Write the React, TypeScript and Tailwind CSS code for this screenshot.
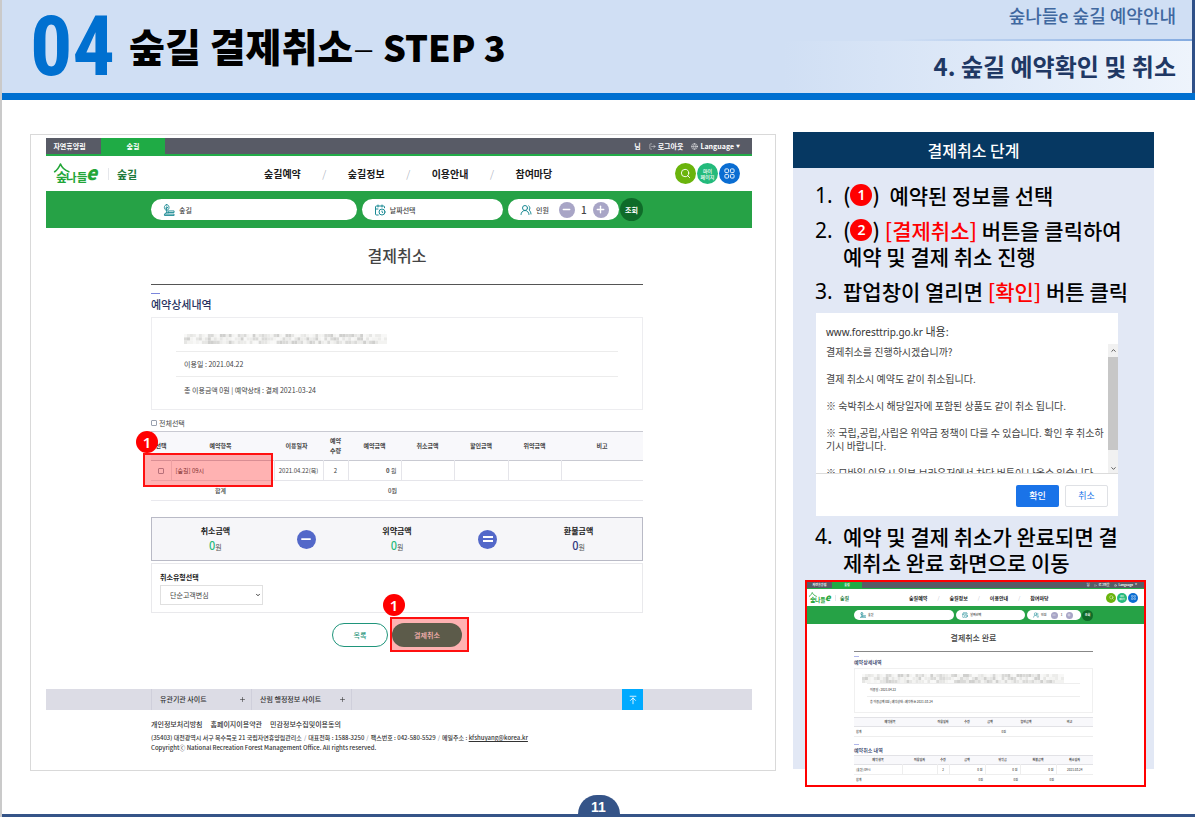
import React from 'react';
import clsx from 'clsx';
import {
  ArrowUpToLine,
  CalendarClock,
  ChevronDown,
  ChevronUp,
  Globe,
  LogOut,
  Minus,
  Plus,
  Search,
  UsersRound,
} from 'lucide-react';

type SizeProps = {
  small?: boolean;
};

type MarkerProps = {
  value: string;
  className?: string;
};

const menu = ['숲길예약', '숲길정보', '이용안내', '참여마당'];

const Marker = ({ value, className }: MarkerProps) => (
  <span
    className={clsx(
      "flex size-[22px] items-center justify-center rounded-full bg-[#ff0000] font-['Noto_Sans',sans-serif] font-semibold leading-none text-white",
      className
    )}
  >
    {value}
  </span>
);

const Logo = ({ small }: SizeProps) => (
  <svg
    viewBox="0 0 136 68"
    className={clsx(
      'overflow-visible',
      small ? 'h-[11px] w-[22px]' : 'h-[22px] w-[44px]'
    )}
    role="img"
    aria-label="숲나들e"
  >
    <path
      d="M2 27C10 22 16 12 20 3C24 13 32 22 46 27"
      fill="none"
      stroke="#23a638"
      strokeWidth="5"
      strokeLinecap="round"
      strokeLinejoin="round"
    />
    <g fill="#23a638" fontFamily="'Noto Sans CJK KR', sans-serif" fontWeight="700">
      <text x="6" y="60" fontSize="38">
        숲
      </text>
      <text x="37" y="59" fontSize="36">
        나들
      </text>
      <text x="99" y="54" fontSize="58" fontStyle="italic" fontWeight="900">
        e
      </text>
    </g>
  </svg>
);

const TreeIcon = ({ className }: { className: string }) => (
  <svg
    viewBox="0 0 24 26"
    className={className}
    fill="none"
    stroke="#1b8a94"
    strokeWidth="2"
    strokeLinecap="round"
    strokeLinejoin="round"
    aria-hidden="true"
  >
    <path d="M7 1.500c-3 0-5 2.500-5 6s2 6 5 6 5-2.500 5-6-2-6-5-6z" />
    <path d="M7 6v13M7 9l2.500-2M7 11L4.500 9" />
    <path d="M11 15h12v3.500H11zM3 22h20v3H3zM3 22l2-3h6" />
  </svg>
);

const GridIcon = ({ className }: { className: string }) => (
  <svg
    viewBox="0 0 24 24"
    className={className}
    fill="none"
    stroke="currentColor"
    strokeWidth="2"
    aria-hidden="true"
  >
    <rect x="2" y="2" width="8" height="8" rx="2" />
    <rect x="14" y="2" width="8" height="8" rx="2" />
    <rect x="2" y="14" width="8" height="8" rx="2" />
    <rect x="14" y="14" width="8" height="8" rx="2" />
  </svg>
);

// Pixelated strip that hides the booking owner's details
const Mosaic = ({ className }: { className: string }) => {
  const shades = ['#f3f3f1', '#e6e6e4', '#dadad8', '#ececea', '#d0d0ce', '#f8f8f7'];
  let seed = 17;
  const cells = Array.from({ length: 204 }, (_, i) => {
    seed = (seed * 16807) % 2147483647;
    return {
      x: (i % 68) * 3,
      y: Math.floor(i / 68) * 3,
      fill: shades[seed % shades.length],
    };
  });
  return (
    <svg
      viewBox="0 0 204 9"
      preserveAspectRatio="none"
      className={className}
      aria-hidden="true"
    >
      {cells.map(({ x, y, fill }) => (
        <rect key={`${x}-${y}`} x={x} y={y} width="3" height="3" fill={fill} />
      ))}
    </svg>
  );
};

const SiteTopBar = ({ small }: SizeProps) => (
  <div
    className={clsx(
      'flex items-stretch bg-[#585b66] font-bold text-white',
      small
        ? 'h-[7px] border-b border-[#22ab48] text-[3px] leading-[6px]'
        : 'h-[18px] border-b-2 border-[#22ab48] text-[7px] leading-[16px]'
    )}
  >
    <a
      href="#forest"
      className={clsx('text-center', small ? 'w-[25px]' : 'w-[55px] pr-2')}
    >
      자연휴양림
    </a>
    <a
      href="#trail"
      className={clsx(
        'bg-[#1fab45] text-center',
        small ? 'w-[30px]' : 'w-[64px]'
      )}
    >
      숲길
    </a>
    <div
      className={clsx(
        'ml-auto flex items-center',
        small ? 'gap-1 pr-[7px]' : 'gap-2 pr-3'
      )}
    >
      <span>님</span>
      <a href="#logout" className="flex items-center gap-[2px]">
        <LogOut className={small ? 'size-[3px]' : 'size-[7px]'} strokeWidth={1.5} />
        로그아웃
      </a>
      <button type="button" className="flex items-center gap-[2px]">
        <Globe className={small ? 'size-[3px]' : 'size-[7px]'} strokeWidth={1.5} />
        Language
        <span className={small ? 'text-[2px]' : 'text-[4px]'}>▼</span>
      </button>
    </div>
  </div>
);

const SiteNav = ({ small }: SizeProps) => {
  const round = clsx(
    'flex items-center justify-center rounded-full text-white',
    small ? 'size-[10px]' : 'size-[21px]'
  );
  return (
    <nav className={clsx('flex items-center', small ? 'h-[17px]' : 'h-[35px]')}>
      <div
        className={clsx(
          'flex items-center',
          small ? 'w-[102px] pl-[2px]' : 'w-[218px] pl-2'
        )}
      >
        <Logo small={small} />
        <a
          href="#trail"
          className={clsx(
            'border-l border-gray-200 font-bold text-[#1c7a3a]',
            small
              ? 'ml-1 pl-1 text-[5px] leading-[6px]'
              : 'ml-[10px] pl-2 text-[11px] leading-3'
          )}
        >
          숲길
        </a>
      </div>
      <ul
        className={clsx(
          'flex font-bold text-[#1a1a1a]',
          small ? 'text-[5px] leading-[6px]' : 'text-[10px] leading-4'
        )}
      >
        {menu.map((item, i) => (
          <li key={item} className="flex">
            {i > 0 && (
              <span
                className={clsx(
                  'text-center font-light text-gray-400',
                  small ? 'w-[22px]' : 'w-[47px]'
                )}
              >
                /
              </span>
            )}
            <a href={`#menu-${i}`}>{item}</a>
          </li>
        ))}
      </ul>
      <div
        className={clsx(
          'ml-auto flex gap-px',
          small ? 'pr-[6px]' : 'pr-3'
        )}
      >
        <button type="button" aria-label="검색" className={clsx(round, 'bg-[#6ab40c]')}>
          <Search className={small ? 'size-[5px]' : 'size-[11px]'} />
        </button>
        <a
          href="#mypage"
          className={clsx(
            round,
            'bg-[#23ba7b] text-center font-medium',
            small ? 'text-[2px] leading-[3px]' : 'text-[5px] leading-[6px]'
          )}
        >
          마이
          <br />
          페이지
        </a>
        <button
          type="button"
          aria-label="전체메뉴"
          className={clsx(round, 'bg-[#0a6dd2]')}
        >
          <GridIcon className={small ? 'size-[5px]' : 'size-[11px]'} />
        </button>
      </div>
    </nav>
  );
};

const SiteSearch = ({ small }: SizeProps) => {
  const pill = clsx(
    'flex items-center rounded-full bg-white',
    small ? 'h-[10px] gap-[2px] pl-[6px]' : 'h-[21px] gap-1 pl-3'
  );
  const step = clsx(
    'flex items-center justify-center rounded-full bg-[#a8a5c6] text-white',
    small ? 'size-[7px]' : 'size-4'
  );
  const icon = small ? 'size-[6px]' : 'size-3';
  return (
    <div
      className={clsx(
        'flex items-center bg-[#26a246] font-medium text-[#444]',
        small
          ? 'h-[18px] gap-[2px] pl-[47px] pr-[51px] text-[3px] leading-[4px]'
          : 'h-[37px] gap-[5px] pl-[105px] pr-[109px] text-[7px] leading-[10px]'
      )}
    >
      <button type="button" className={clsx(pill, 'flex-[3]')}>
        <TreeIcon className={icon} />
        숲길
      </button>
      <button type="button" className={clsx(pill, 'flex-[2]')}>
        <CalendarClock className={clsx(icon, 'text-[#1b8a94]')} />
        날짜선택
      </button>
      <div className={clsx(pill, small ? 'w-[54px]' : 'w-[111px]')}>
        <UsersRound className={clsx(icon, 'text-[#1b8a94]')} />
        인원
        <button
          type="button"
          aria-label="인원 감소"
          className={clsx(step, small ? 'ml-[2px]' : 'ml-[6px]')}
        >
          <Minus className={small ? 'size-1' : 'size-[11px]'} strokeWidth={3} />
        </button>
        <span
          className={clsx('text-center', small ? 'w-1' : 'w-[10px] text-[10px]')}
        >
          1
        </span>
        <button type="button" aria-label="인원 증가" className={step}>
          <Plus className={small ? 'size-1' : 'size-[11px]'} strokeWidth={3} />
        </button>
      </div>
      <button
        type="button"
        className={clsx(
          'shrink-0 rounded-full bg-[#0f6b29] font-bold text-white',
          small ? '-ml-px size-[11px]' : '-ml-1 size-[23px]'
        )}
      >
        조회
      </button>
    </div>
  );
};

const SectionHeading = ({
  small,
  children,
}: SizeProps & { children: React.ReactNode }) => (
  <>
    <div
      className={clsx(
        'h-px bg-[#7b86dc]',
        small ? 'w-[5px] opacity-60' : 'w-[9px]'
      )}
    />
    <h3
      className={clsx(
        'mt-[2px] font-medium text-[#28325f]',
        small ? 'text-[5px] leading-[6px]' : 'text-[11px] leading-4'
      )}
    >
      {children}
    </h3>
  </>
);

const BookingTable = () => (
  <table className="w-full table-fixed border-collapse text-center text-[6px] leading-[10px] text-[#444]">
    <colgroup>
      <col className="w-[20px]" />
      <col className="w-[103px]" />
      <col className="w-[49px]" />
      <col className="w-[25px]" />
      <col className="w-[53px]" />
      <col className="w-[53px]" />
      <col className="w-[54px]" />
      <col className="w-[53px]" />
      <col />
    </colgroup>
    <thead className="border-y border-[#c9cad2] bg-[#f8f8fb]">
      <tr className="h-[29px]">
        <th className="whitespace-nowrap font-bold">선택</th>
        <th className="pr-1 font-bold">예약항목</th>
        <th className="pr-1 font-bold">이용일자</th>
        <th className="font-bold">
          예약
          <br />
          수량
        </th>
        <th className="font-bold">예약금액</th>
        <th className="font-bold">취소금액</th>
        <th className="font-bold">할인금액</th>
        <th className="font-bold">위약금액</th>
        <th className="font-bold">비고</th>
      </tr>
    </thead>
    <tbody>
      <tr className="h-[20px] divide-x divide-[#e5e5ea] border-b border-[#e5e5ea]">
        <td>
          <input
            type="checkbox"
            aria-label="[숲길] 09시 선택"
            className="mx-auto block size-[6px] appearance-none rounded-[1px] border border-gray-400 bg-white"
          />
        </td>
        <td className="pl-1 text-left">[숲길] 09시</td>
        <td className="whitespace-nowrap">2021.04.22(목)</td>
        <td>2</td>
        <td className="pr-1 text-right">
          <b>0</b> 원
        </td>
        <td />
        <td />
        <td />
        <td />
      </tr>
      <tr className="h-[20px] border-b border-[#e9e9ee] font-medium">
        <td />
        <td className="pr-1">합계</td>
        <td />
        <td />
        <td className="pr-1 text-right">0원</td>
        <td colSpan={4} />
      </tr>
    </tbody>
  </table>
);

type AmountProps = {
  label: string;
  className: string;
};

const Amount = ({ label, className }: AmountProps) => (
  <div className="text-center">
    <div className="text-[8px] font-bold leading-[14px] text-[#222]">{label}</div>
    <div className="text-[7px] leading-[14px] text-[#555]">
      <span className={clsx('text-[11px] font-medium', className)}>0</span>원
    </div>
  </div>
);

const CancelPage = () => (
  <div className="mt-[2px] border border-[#d9d9d9] pb-[17px] pl-[15px] pr-[23px] pt-[3px]">
    <SiteTopBar />
    <SiteNav />
    <SiteSearch />

    <div className="pl-[105px] pr-[109px] pt-[15px]">
      <h2 className="text-center text-[16px] font-medium leading-6 text-[#444]">
        결제취소
      </h2>
      <hr className="mb-2 mt-[17px] border-[#555]" />
      <SectionHeading>예약상세내역</SectionHeading>

      <div className="mt-[5px] border border-[#ededf0] px-[24px] pb-[6px] pt-4 text-[7px] text-[#444]">
        <div className="border-b border-[#ececec] pb-[7px] pl-2">
          <Mosaic className="h-[10px] w-[203px]" />
        </div>
        <p className="border-b border-[#ececec] pl-2 leading-[24px]">
          이용일 : 2021.04.22
        </p>
        <p className="pl-2 leading-[26px]">
          총 이용금액 0원 | 예약상태 : 결제 2021-03-24
        </p>
      </div>

      <label className="mb-[3px] mt-2 flex items-center gap-[2px] text-[7px] leading-[10px] text-[#444]">
        <input
          type="checkbox"
          className="size-[6px] appearance-none rounded-[1px] border border-gray-400"
        />
        전체선택
      </label>

      <div className="relative">
        <BookingTable />
        <div className="absolute -left-2 top-[22px] h-[34px] w-[130px] border-2 border-[#ff1010] bg-[#ff0000]/30" />
        <Marker value="1" className="absolute -left-[15px] top-0 text-[15px]" />
      </div>

      <div className="mt-4 grid h-[44px] grid-cols-5 place-items-center border border-[#b9bac6] bg-[#f6f6f9] px-[18px]">
        <Amount label="취소금액" className="text-[#2abb7c]" />
        <span className="flex size-[19px] items-center justify-center rounded-full bg-[#5368c9] text-white">
          <Minus className="size-[14px]" strokeWidth={3} />
        </span>
        <Amount label="위약금액" className="text-[#2abb7c]" />
        <span className="flex size-[19px] flex-col items-center justify-center gap-[2px] rounded-full bg-[#5368c9]">
          <i className="h-[2px] w-[10px] bg-white" />
          <i className="h-[2px] w-[10px] bg-white" />
        </span>
        <Amount label="환불금액" className="text-[#333a80]" />
      </div>

      <div className="mt-[2px] border border-[#e9e9ec] pb-[7px] pl-2 pt-2 text-[7px]">
        <label
          htmlFor="cancel-reason"
          className="block font-bold leading-[10px] text-[#222]"
        >
          취소유형선택
        </label>
        <div className="relative mt-[3px] w-[103px]">
          <select
            id="cancel-reason"
            className="block h-[20px] w-full appearance-none border border-[#e0e0e0] bg-white pl-[9px] text-[#444]"
          >
            <option>단순고객변심</option>
          </select>
          <ChevronDown
            className="pointer-events-none absolute right-[2px] top-[7px] size-[6px]"
            strokeWidth={3}
          />
        </div>
      </div>

      <div className="relative mx-auto mt-[10px] flex w-[130px] gap-1 text-[7px] font-medium">
        <button
          type="button"
          className="h-6 w-[56px] rounded-full border border-[#1f957b] text-[#1f957b]"
        >
          목록
        </button>
        <button
          type="button"
          className="h-6 w-[70px] rounded-full bg-[#16836a] text-white"
        >
          결제취소
        </button>
        <div className="absolute -right-[7px] -top-[6px] h-[35px] w-[79px] border-2 border-[#ff1010] bg-[#ff0000]/30" />
        <Marker
          value="1"
          className="absolute -top-[29px] left-[51px] text-[15px]"
        />
      </div>
    </div>

    <footer className="mt-[42px] text-[#333]">
      <div className="flex h-[21px] bg-[#dcdce5] pl-[105px] pr-[109px] text-[7px] font-medium leading-[21px]">
        {['유관기관 사이트', '산림 행정정보 사이트'].map((site) => (
          <button
            key={site}
            type="button"
            className="flex w-[100px] items-center justify-between border-l border-[#cfcfdb] pl-2 pr-[5px]"
          >
            {site}
            <Plus className="size-[7px]" />
          </button>
        ))}
        <span className="border-l border-[#cfcfdb]" />
        <button
          type="button"
          aria-label="맨 위로"
          className="ml-auto flex w-[21px] items-center justify-center bg-[#00aaff] text-white"
        >
          <ArrowUpToLine className="size-[10px]" />
        </button>
      </div>
      <div className="pl-[105px] text-[6px] font-medium leading-[10px]">
        <ul className="mt-[9px] flex gap-2 text-[7px]">
          <li>
            <a href="#privacy">개인정보처리방침</a>
          </li>
          <li>
            <a href="#terms">홈페이지이용약관</a>
          </li>
          <li>
            <a href="#consent">민감정보수집및이용동의</a>
          </li>
        </ul>
        <address className="mt-1 flex gap-[2px] not-italic">
          <span>(35403) 대전광역시 서구 복수북로 21 국립자연휴양림관리소</span>
          <span className="text-gray-400">/</span>
          <span>대표전화 : 1588-3250</span>
          <span className="text-gray-400">/</span>
          <span>팩스번호 : 042-580-5529</span>
          <span className="text-gray-400">/</span>
          <span>
            메일주소 :{' '}
            <a href="mailto:kfshuyang@korea.kr" className="underline">
              kfshuyang@korea.kr
            </a>
          </span>
        </address>
        <p>
          Copyrightⓒ National Recreation Forest Management Office. All rights
          reserved.
        </p>
      </div>
    </footer>
  </div>
);

const ConfirmDialog = () => (
  <div className="bg-white text-[#444]">
    <h3 className="px-[10px] pb-1 pt-[11px] font-['Noto_Sans','Noto_Sans_CJK_KR',sans-serif] text-[10px] font-normal leading-4 text-[#333]">
      www.foresttrip.go.kr <span className="text-[11px]">내용:</span>
    </h3>
    <div className="flex h-[130px] border-b border-[#dcdcdc]">
      <div className="flex-1 space-y-[14px] overflow-hidden whitespace-nowrap pl-[10px] pt-px text-[10px] font-normal leading-[13px]">
        <p>결제취소를 진행하시겠습니까?</p>
        <p>결제 취소시 예약도 같이 취소됩니다.</p>
        <p>※ 숙박취소시 해당일자에 포함된 상품도 같이 취소 됩니다.</p>
        <p>
          ※ 국립,공립,사립은 위약금 정책이 다를 수 있습니다. 확인 후 취소하
          <br />
          기시 바랍니다.
        </p>
        <p>※ 모바일 이용시 일부 브라우저에서 차단 버튼이 나올수 있습니다</p>
      </div>
      <div className="flex w-[10px] flex-col items-center bg-[#f1f1f1] text-[#444]">
        <ChevronUp className="my-[3px] size-[7px]" strokeWidth={3} />
        <span className="h-[93px] w-full bg-[#c7c7c7]" />
        <ChevronDown className="mb-[1px] mt-auto size-[7px]" strokeWidth={3} />
      </div>
    </div>
    <div className="flex justify-end gap-[6px] pb-[9px] pr-[10px] pt-[11px] text-[9px] leading-4">
      <button
        type="button"
        className="h-[22px] w-[43px] rounded-[2px] bg-[#1a73e8] font-medium text-white"
      >
        확인
      </button>
      <button
        type="button"
        className="h-[22px] w-[43px] rounded-[2px] border border-[#dfe1e5] font-normal text-[#1a73e8]"
      >
        취소
      </button>
    </div>
  </div>
);

const DonePage = () => (
  <div className="border-2 border-[#ff0000] bg-white">
    <SiteTopBar small />
    <SiteNav small />
    <SiteSearch small />
    <div className="pl-[47px] pr-[51px] pt-[9px] text-[3px] text-[#444]">
      <h2 className="text-center text-[8px] leading-[10px]">결제취소 완료</h2>
      <hr className="mb-1 mt-2 border-[#888]" />
      <SectionHeading small>예약상세내역</SectionHeading>
      <div className="mt-[3px] border border-[#f0f0f0] px-[7px] pb-1 pt-[5px]">
        <Mosaic className="block h-[9px] w-[202px]" />
        <p className="mx-[5px] border-y border-[#eee] pl-[3px] leading-[12px]">
          이용일 : 2021.04.22
        </p>
        <p className="pl-2 leading-[11px]">
          총 이용금액 0원 | 예약상태 : 예약취소 2021-03-24
        </p>
      </div>

      <table className="mb-[7px] mt-1 w-full table-fixed border-collapse text-center leading-[4px]">
        <colgroup>
          <col className="w-[72px]" />
          <col className="w-[34px]" />
          <col className="w-[14px]" />
          <col className="w-[32px]" />
          <col className="w-[40px]" />
          <col />
        </colgroup>
        <thead>
          <tr className="h-[9px] border-y border-[#e2e2e6] bg-[#f8f8fb]">
            <th>예약항목</th>
            <th>이용일자</th>
            <th>수량</th>
            <th>금액</th>
            <th>할인금액</th>
            <th>비고</th>
          </tr>
        </thead>
        <tbody>
          <tr className="h-[10px] border-b border-[#eee]">
            <td className="pl-[2px] text-left">합계</td>
            <td />
            <td />
            <td className="text-right">0원</td>
            <td />
            <td />
          </tr>
        </tbody>
      </table>

      <SectionHeading small>예약취소 내역</SectionHeading>
      <table className="mt-[2px] w-full table-fixed border-collapse text-center leading-[4px]">
        <colgroup>
          <col className="w-[48px]" />
          <col className="w-[35px]" />
          <col className="w-[12px]" />
          <col className="w-[36px]" />
          <col className="w-[35px]" />
          <col className="w-[36px]" />
          <col />
        </colgroup>
        <thead>
          <tr className="h-[9px] border-y border-[#e2e2e6] bg-[#f8f8fb]">
            <th>예약 항목</th>
            <th>이용일자</th>
            <th>수량</th>
            <th>금액</th>
            <th>위약금</th>
            <th>환불금액</th>
            <th>취소일자</th>
          </tr>
        </thead>
        <tbody>
          <tr className="h-[10px] divide-x divide-[#eee] border-b border-[#eee]">
            <td className="pl-[2px] text-left">[숲길] 09시</td>
            <td />
            <td>2</td>
            <td className="pr-[2px] text-right">0 원</td>
            <td className="pr-[2px] text-right">0 원</td>
            <td className="pr-[2px] text-right">0 원</td>
            <td>2021.03.24</td>
          </tr>
          <tr className="h-[10px]">
            <td className="pl-[2px] text-left">합계</td>
            <td />
            <td />
            <td className="pr-[2px] text-right">0원</td>
            <td className="pr-[2px] text-right">0원</td>
            <td className="pr-[2px] text-right">0원</td>
            <td />
          </tr>
        </tbody>
      </table>
    </div>
  </div>
);

const StepNumber = ({ value }: { value: number }) => (
  <span className="w-7 shrink-0 font-['Noto_Sans',sans-serif] font-normal">
    {value}.
  </span>
);

const StepsPanel = () => (
  <aside className="mb-[18px] bg-[#e2e8f5]">
    <h2 className="bg-[#063862] text-center text-[16px] font-medium leading-9 text-white">
      결제취소 단계
    </h2>
    <ol className="-mb-[18px] pt-[14px] text-[21px] font-medium leading-[26px] text-black">
      <li className="flex pl-[22px]">
        <StepNumber value={1} />
        <p className="flex items-center whitespace-pre">
          (<Marker value="1" className="text-[14px]" />
          ){'  '}예약된 정보를 선택
        </p>
      </li>
      <li className="mt-[9px] flex pl-[22px]">
        <StepNumber value={2} />
        <div>
          <p className="flex items-center whitespace-pre">
            (<Marker value="2" className="text-[14px]" />){' '}
            <span className="text-[#ff0000]">[결제취소]</span> 버튼을 클릭하여
          </p>
          <p>예약 및 결제 취소 진행</p>
        </div>
      </li>
      <li className="mt-[9px]">
        <div className="flex pl-[22px]">
          <StepNumber value={3} />
          <p className="whitespace-nowrap">
            팝업창이 열리면 <span className="text-[#ff0000]">[확인]</span> 버튼
            클릭
          </p>
        </div>
        <div className="ml-[23px] mr-9 mt-[9px]">
          <ConfirmDialog />
        </div>
      </li>
      <li className="mt-[7px]">
        <div className="flex pl-[22px]">
          <StepNumber value={4} />
          <p className="whitespace-nowrap">
            예약 및 결제 취소가 완료되면 결
            <br />
            제취소 완료 화면으로 이동
          </p>
        </div>
        <div className="ml-3 mr-2 mt-[5px]">
          <DonePage />
        </div>
      </li>
    </ol>
  </aside>
);

const SlideHeader = () => (
  <header className="flex h-[100px] border-b-[7px] border-[#0070d0] bg-[#d0dff4]">
    <div className="w-[127px] pl-7 font-['Noto_Sans_ExtraCondensed','Liberation_Sans_Narrow','Roboto_Condensed','Open_Sans_Condensed',sans-serif] text-[84px] font-bold leading-[93px] text-[#0070d0]">
      04
    </div>
    <h1 className="whitespace-nowrap text-[39px] font-black leading-[90px] text-black">
      숲길 결제취소<span className="font-light">–</span>{' '}
      <span className="text-[36px]">STEP 3</span>
    </h1>
    <div className="ml-auto w-[412px] border-r-[3px] border-[#2f5088] text-right">
      <p className="h-[39px] pr-4 text-[18px] font-medium leading-[30px] text-[#4068a0]">
        숲나들e 숲길 예약안내
      </p>
      <div className="ml-[117px] h-[2px] bg-linear-to-r from-[#d0dff4] to-[#84abe0]" />
      <p className="h-[52px] bg-linear-to-r from-[#d0dff4] to-[#eef4fc] pr-4 text-[24px] font-bold leading-[50px] text-[#1f3864]">
        4. 숲길 예약확인 및 취소
      </p>
    </div>
  </header>
);

const App = () => (
  <div className="flex min-h-screen flex-col border-l-2 border-[#cacaca] bg-white font-['Noto_Sans_CJK_KR',sans-serif]">
    <SlideHeader />
    <main className="grid grid-cols-[746fr_361fr] items-start gap-[17px] pl-7 pr-[41px] pt-8">
      <CancelPage />
      <StepsPanel />
    </main>
    <footer className="mt-auto border-b-[3px] border-[#355488]">
      <div className="mx-auto h-[19px] w-[42px] rounded-t-full bg-[#355488] text-center font-['Liberation_Sans',sans-serif] text-[14px] font-bold leading-[24px] text-white">
        11
      </div>
    </footer>
  </div>
);

export default App;
